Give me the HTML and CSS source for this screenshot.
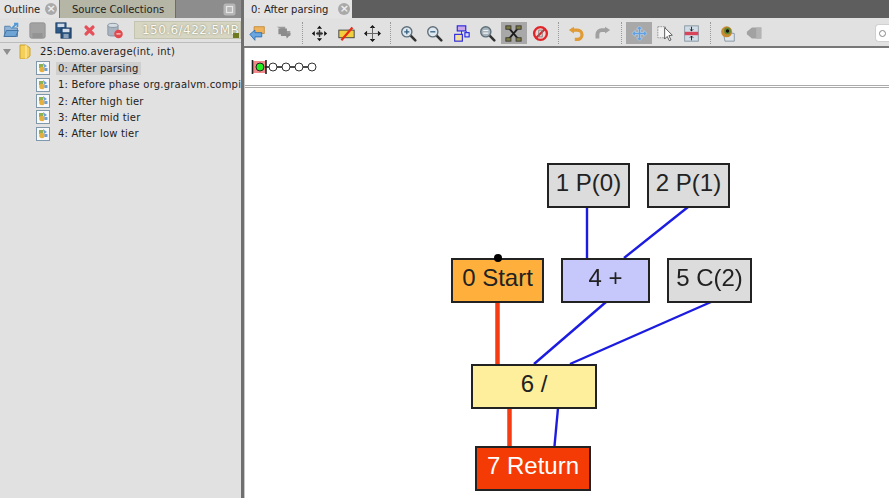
FILE: index.html
```html
<!DOCTYPE html>
<html>
<head>
<title>0: After parsing</title>
<link rel="stylesheet" href="styles.css">
</head>
<body>

<svg class="defs" width="0" height="0">
  <symbol id="i-open" viewBox="0 0 20 20">
    <path d="M2 5h6l2 2h7v10H2z" fill="#8fb4d8" stroke="#4a78a8"/>
    <path d="M1 17l3-7h14l-3 7z" fill="#6fa5d4" stroke="#3c6c9c"/>
    <path d="M11 7l5-5M13 2h4v4" fill="none" stroke="#4f9ad6" stroke-width="2"/>
  </symbol>
  <symbol id="i-save" viewBox="0 0 20 20">
    <rect x="1" y="1" width="18" height="18" rx="2" fill="#a2a2a2" stroke="#8f8f8f"/>
    <rect x="4" y="13" width="12" height="6" fill="#939393"/>
  </symbol>
  <symbol id="i-saveall" viewBox="0 0 20 20">
    <rect x="1" y="1" width="12" height="12" fill="#2e5a88" stroke="#1c3f66"/>
    <rect x="3" y="2" width="8" height="4" fill="#cfdbe8"/>
    <rect x="7" y="7" width="12" height="12" fill="#284f79" stroke="#1c3f66"/>
    <rect x="9" y="8" width="8" height="4" fill="#d5dfea"/>
    <rect x="10" y="14" width="6" height="5" fill="#8aa2ba"/>
  </symbol>
  <symbol id="i-x" viewBox="0 0 20 20">
    <path d="M6 6l8 8M14 6l-8 8" stroke="#e5505a" stroke-width="4" stroke-linecap="round"/>
  </symbol>
  <symbol id="i-db" viewBox="0 0 20 20">
    <path d="M1 4v11c0 2 12 2 12 0V4z" fill="#a9b4c0" stroke="#7e8c9a"/>
    <ellipse cx="7" cy="4" rx="6" ry="2.4" fill="#d5dce3" stroke="#7e8c9a"/>
    <circle cx="13.5" cy="14" r="5" fill="#e2484c"/>
    <path d="M11 14h5" stroke="#f7d0d0" stroke-width="1.5"/>
  </symbol>
  <symbol id="i-restore" viewBox="0 0 20 20">
    <rect x="2" y="2" width="16" height="16" rx="3" fill="#b5b5b5"/>
    <rect x="6" y="6" width="8" height="8" fill="none" stroke="#e6e6e6" stroke-width="1.6"/>
  </symbol>
  <symbol id="i-prev" viewBox="0 0 20 20">
    <path d="M6 2h12v8H6z" fill="#eeb35c" stroke="#c08a38"/>
    <path d="M1 11l6-5v3h8v5H7v4z" fill="#6aa7e0" stroke="#2c6cb0"/>
  </symbol>
  <symbol id="i-next" viewBox="0 0 20 20">
    <path d="M2 2h10v5h6v6h-7v-6" fill="#9b9b9b"/>
    <path d="M4 4h10v6h5l-5 6-1-3H7v-2H4z" fill="#8c8c8c"/>
  </symbol>
  <symbol id="i-in" viewBox="0 0 20 20">
    <path d="M10 1l3 3.5H7zM10 19l-3-3.5h6zM1 10l3.500-3v6zM19 10l-3.500 3V7z" fill="#111"/>
    <path d="M7 8h6v4H7z" fill="#777"/>
    <path d="M10 6v8M6 10h8" stroke="#333" stroke-width="1.600"/>
  </symbol>
  <symbol id="i-strike" viewBox="0 0 20 20">
    <rect x="1" y="6" width="18" height="9" fill="#f0d040" stroke="#333"/>
    <path d="M4 18L17 3" stroke="#ea2a14" stroke-width="2.600"/>
  </symbol>
  <symbol id="i-out" viewBox="0 0 20 20">
    <path d="M10 0l3.200 3.600H6.800zM10 20l-3.200-3.600h6.400zM0 10l3.600-3.200v6.400zM20 10l-3.600 3.200V6.800z" fill="#111"/>
    <path d="M10 3v14M3 10h14" stroke="#666" stroke-width="1.200"/>
  </symbol>
  <symbol id="i-zin" viewBox="0 0 20 20">
    <path d="M12 12l6 6" stroke="#333" stroke-width="3" stroke-linecap="round"/>
    <circle cx="8" cy="8" r="6" fill="#dfe8ef" stroke="#5f6f7a" stroke-width="1.600"/>
    <path d="M5 8h6M8 5v6" stroke="#2f5f80" stroke-width="1.500"/>
  </symbol>
  <symbol id="i-zout" viewBox="0 0 20 20">
    <path d="M12 12l6 6" stroke="#333" stroke-width="3" stroke-linecap="round"/>
    <circle cx="8" cy="8" r="6" fill="#dfe8ef" stroke="#5f6f7a" stroke-width="1.600"/>
    <path d="M5 8h6" stroke="#2f5f80" stroke-width="1.500"/>
  </symbol>
  <symbol id="i-tree" viewBox="0 0 20 20">
    <rect x="5" y="1" width="10" height="6" fill="#c8a8e8" stroke="#2222dd" stroke-width="1.300"/>
    <rect x="2" y="11" width="9" height="8" fill="#f2e0a0" stroke="#2222dd" stroke-width="1.300"/>
    <rect x="14" y="9" width="5" height="5" fill="#d8d8f8" stroke="#2222dd" stroke-width="1.300"/>
    <path d="M10 7v4M15 7l2 2" stroke="#2222dd"/>
  </symbol>
  <symbol id="i-zfit" viewBox="0 0 20 20">
    <path d="M12 12l6 6" stroke="#333" stroke-width="3" stroke-linecap="round"/>
    <circle cx="8" cy="8" r="6" fill="#a8b4bc" stroke="#5f6f7a" stroke-width="1.600"/>
    <path d="M5 6.500h6M5 9.500h6" stroke="#eef2f5" stroke-width="1.400"/>
  </symbol>
  <symbol id="i-graph" viewBox="0 0 20 20">
    <path d="M4 3l12 14M16 3L4 17" stroke="#1c1c1c" stroke-width="2.200"/>
    <rect x="1" y="1" width="6" height="4" fill="#7d7a3c" stroke="#333"/>
    <rect x="13" y="1" width="6" height="4" fill="#7d7a3c" stroke="#333"/>
    <rect x="1" y="15" width="6" height="4" fill="#7d7a3c" stroke="#333"/>
    <rect x="13" y="15" width="6" height="4" fill="#7d7a3c" stroke="#333"/>
  </symbol>
  <symbol id="i-ban" viewBox="0 0 20 20">
    <circle cx="10" cy="10" r="7.500" fill="#f4d8d8" stroke="#e0262a" stroke-width="2.800"/>
    <path d="M5 15L15 5" stroke="#e0262a" stroke-width="2.400"/>
    <rect x="8" y="6" width="4" height="8" fill="none" stroke="#777"/>
  </symbol>
  <symbol id="i-undo" viewBox="0 0 20 20">
    <path d="M4 6h7a5 5 0 0 1 0 11H8" fill="none" stroke="#e09a36" stroke-width="3.800"/>
    <path d="M1 6l6-4v8z" fill="#e09a36"/>
  </symbol>
  <symbol id="i-redo" viewBox="0 0 20 20">
    <path d="M15 6H9a5 5 0 0 0-5 5v5" fill="none" stroke="#a0a0a0" stroke-width="4.500"/>
    <path d="M19 6l-6-4v8z" fill="#a0a0a0"/>
  </symbol>
  <symbol id="i-pan" viewBox="0 0 20 20">
    <path d="M10 1l3.500 4h-2.300v3.800H15V6.500l4 3.500-4 3.500v-2.300h-3.800V15h2.300L10 19l-3.500-4h2.300v-3.800H5v2.300L1 10l4-3.500v2.300h3.800V5H6.500z" fill="#5f9fe2" stroke="#e4f0fa" stroke-width=".5"/>
  </symbol>
  <symbol id="i-select" viewBox="0 0 20 20">
    <rect x="1" y="2" width="9" height="13" fill="#f2f2f2" stroke="#8a8a8a" stroke-dasharray="2 1"/>
    <path d="M9 3l9 9-4 .5 2.500 5-2 1-2.500-5-3 3z" fill="#fff" stroke="#444"/>
  </symbol>
  <symbol id="i-split" viewBox="0 0 20 20">
    <rect x="2" y="1" width="16" height="18" fill="#d0dce6" stroke="#7e909e"/>
    <rect x="2" y="8" width="16" height="4" fill="#d8455a"/>
    <path d="M10 2v5M8 5l2 2 2-2M10 18v-5M8 15l2-2 2 2" stroke="#111" fill="none"/>
  </symbol>
  <symbol id="i-eye" viewBox="0 0 20 20">
    <path d="M5 8l13 2v9H7z" fill="#dfe4e8" stroke="#7e909e"/>
    <circle cx="9" cy="8" r="6.500" fill="#c88a30"/>
    <circle cx="10" cy="7" r="4" fill="#5f8a30"/>
    <circle cx="10" cy="7" r="2" fill="#111"/>
  </symbol>
  <symbol id="i-tag" viewBox="0 0 20 20">
    <path d="M7 3h11v13H7l-6-5V8z" fill="#a2a2a2"/>
    <rect x="12" y="3" width="6" height="13" fill="#b4b4b4"/>
  </symbol>
  <symbol id="i-group" viewBox="0 0 14 14">
    <rect x=".5" y=".5" width="13" height="13" fill="#f6f8fa" stroke="#7f98ac"/>
    <rect x="3" y="3" width="4" height="4" fill="#8fb050"/>
    <path d="M7 2l4 3-3 2z" fill="#6f9fd8"/>
    <circle cx="6" cy="8.500" r="2.800" fill="#e4b040"/>
    <rect x="8.500" y="7" width="3" height="3" fill="#6f9fd8"/>
  </symbol>
  <symbol id="i-folder" viewBox="0 0 12 15">
    <path d="M1 1h6l4 3v8l-4 3H2a1 1 0 0 1-1-1z" fill="#f4cf5a" stroke="#c8a030"/>
    <path d="M7 1v14" stroke="#fff0b0"/>
  </symbol>
</svg>

<div class="app">

  <div class="side">
    <div class="tabs side-tabs">
      <div class="tab tab-on tab-outline">Outline <span class="close">&times;</span></div>
      <div class="tab tab-off">Source Collections</div>
      <div class="tab-rest">
        <svg class="restore"><use href="#i-restore"/></svg>
      </div>
    </div>

    <div class="side-bar">
      <div class="side-tool"><svg class="ico"><use href="#i-open"/></svg></div>
      <div class="side-tool"><svg class="ico"><use href="#i-save"/></svg></div>
      <div class="side-tool"><svg class="ico"><use href="#i-saveall"/></svg></div>
      <div class="side-tool"><svg class="ico"><use href="#i-x"/></svg></div>
      <div class="side-tool"><svg class="ico"><use href="#i-db"/></svg></div>
      <div class="memory">150.6/422.5MB<span class="memory-mark"></span></div>
    </div>

    <ul class="tree">
      <li class="root">
        <span class="twist"></span>
        <svg class="folder"><use href="#i-folder"/></svg>
        <span>25:Demo.average(int, int)</span>
      </li>
      <li><svg class="leaf"><use href="#i-group"/></svg><span class="sel">0: After parsing</span></li>
      <li><svg class="leaf"><use href="#i-group"/></svg><span>1: Before phase org.graalvm.compi</span></li>
      <li><svg class="leaf"><use href="#i-group"/></svg><span>2: After high tier</span></li>
      <li><svg class="leaf"><use href="#i-group"/></svg><span>3: After mid tier</span></li>
      <li><svg class="leaf"><use href="#i-group"/></svg><span>4: After low tier</span></li>
    </ul>
  </div>

  <div class="split"></div>

  <div class="main">
    <div class="tabs main-tabs">
      <div class="tab tab-on tab-main">0: After parsing <span class="close close-main">&times;</span></div>
    </div>

    <div class="toolbar">
      <div class="group">
        <div class="tool"><svg class="ico"><use href="#i-prev"/></svg></div>
        <div class="tool"><svg class="ico"><use href="#i-next"/></svg></div>
      </div>
      <div class="group">
        <div class="tool"><svg class="ico"><use href="#i-in"/></svg></div>
        <div class="tool"><svg class="ico"><use href="#i-strike"/></svg></div>
        <div class="tool"><svg class="ico"><use href="#i-out"/></svg></div>
      </div>
      <div class="group">
        <div class="tool"><svg class="ico"><use href="#i-zin"/></svg></div>
        <div class="tool"><svg class="ico"><use href="#i-zout"/></svg></div>
        <div class="tool"><svg class="ico"><use href="#i-tree"/></svg></div>
        <div class="tool"><svg class="ico"><use href="#i-zfit"/></svg></div>
        <div class="tool tool-on"><svg class="ico"><use href="#i-graph"/></svg></div>
        <div class="tool"><svg class="ico"><use href="#i-ban"/></svg></div>
      </div>
      <div class="group">
        <div class="tool"><svg class="ico"><use href="#i-undo"/></svg></div>
        <div class="tool"><svg class="ico"><use href="#i-redo"/></svg></div>
      </div>
      <div class="group">
        <div class="tool tool-on"><svg class="ico"><use href="#i-pan"/></svg></div>
        <div class="tool"><svg class="ico"><use href="#i-select"/></svg></div>
        <div class="tool"><svg class="ico"><use href="#i-split"/></svg></div>
      </div>
      <div class="group group-last">
        <div class="tool"><svg class="ico"><use href="#i-eye"/></svg></div>
        <div class="tool"><svg class="ico"><use href="#i-tag"/></svg></div>
      </div>
      <div class="search"><span class="search-c"></span></div>
    </div>

    <div class="slider">
      <svg class="slider-svg" width="72" height="20" viewBox="0 0 72 20">
        <rect x="3" y="4" width="13" height="12" fill="#f08a8a"/>
        <path d="M15 10h48" stroke="#111" stroke-width="1.600"/>
        <path d="M2.500 3v14M16 3v14" stroke="#222" stroke-width="1.600"/>
        <circle cx="10" cy="10" r="4" fill="#22ee22" stroke="#222"/>
        <circle cx="23" cy="10" r="4" fill="#fff" stroke="#333"/>
        <circle cx="36" cy="10" r="4" fill="#fff" stroke="#333"/>
        <circle cx="49" cy="10" r="4" fill="#fff" stroke="#333"/>
        <circle cx="62" cy="10" r="4" fill="#fff" stroke="#333"/>
      </svg>
    </div>

    <div class="canvas">
      <svg class="edges" width="644" height="410" viewBox="245 88 644 410">
        <g class="data">
          <line x1="587" y1="207" x2="587" y2="258"/>
          <line x1="688" y1="207" x2="624" y2="258"/>
          <line x1="606" y1="302" x2="534" y2="364"/>
          <line x1="711" y1="302" x2="570" y2="364"/>
          <line x1="558" y1="408" x2="554.500" y2="446"/>
        </g>
        <g class="control">
          <line x1="497.500" y1="302" x2="497.500" y2="364"/>
          <line x1="509.500" y1="408" x2="509.500" y2="446"/>
        </g>
      </svg>
      <div class="node n-p0">1 P(0)</div>
      <div class="node n-p1">2 P(1)</div>
      <div class="node n-start">0 Start</div>
      <div class="node n-add">4 +</div>
      <div class="node n-c2">5 C(2)</div>
      <div class="node n-div">6 /</div>
      <div class="node n-ret">7 Return</div>
      <span class="slot"></span>
    </div>
  </div>

</div>

</body>
</html>
```

FILE: styles.css
```css
html, body { margin: 0; padding: 0; height: 100%; overflow: hidden; background: #fff; }
body       { font: 10px "DejaVu Sans", sans-serif; color: #222; }
.defs      { position: absolute; }
.app       { display: flex; height: 498px; filter: blur(0.6px); }

/* tabs */
.tabs       { display: flex; height: 18px; flex: none; }
.side-tabs  { background: #8d8d8d; }
.main-tabs  { background: #5e5e5e; }
.tab        { display: flex; align-items: center; box-sizing: border-box; white-space: nowrap; }
.tab-on     { background: #e4e4e4; }
.tab-off    { background: #b6b6a6; width: 117px; padding-left: 12px; border-right: 1px solid #6c6c6c; border-left: 1px solid #777; }
.tab-outline { width: 59px; padding-left: 4px; }
.tab-main   { width: 108px; padding-left: 7px; margin-left: -1px; }
.tab-rest   { flex: 1; display: flex; justify-content: flex-end; align-items: center; padding-right: 4px; }
.restore    { width: 15px; height: 15px; }
.close      { display: inline-block; width: 12px; height: 12px; margin-left: 5px; border-radius: 50%; background: #a9a9a9; color: #eee; font-size: 11px; line-height: 11px; text-align: center; font-weight: bold; }
.close-main { margin-left: 10px; }

/* left panel */
.side       { width: 241px; flex: none; background: #e1e1e1; overflow: hidden; }
.split      { width: 4px; flex: none; background: #c8c8c8; border-left: 3px solid #6f6f6f; box-sizing: border-box; }
.side-bar   { display: flex; align-items: center; gap: 4px; height: 24px; border-bottom: 1px solid #bcbcbc; }
.side-tool  { width: 22px; height: 20px; display: flex; justify-content: center; align-items: center; }
.ico        { width: 17px; height: 17px; }
.memory     { position: relative; flex: none; box-sizing: border-box; width: 107px; height: 18px; margin-left: 4px; padding-left: 7px; background: #d6d6c2; border: 1px solid #c4c4b0; color: #fbfbf4; font: 12px/16px "DejaVu Sans", sans-serif; letter-spacing: .45px; text-shadow: 0 0 2px #77776a; white-space: nowrap; overflow: hidden; }
.memory-mark { position: absolute; right: 1px; bottom: 0; width: 6px; height: 5px; background: #6f7a20; }

.tree       { list-style: none; margin: 0; padding: 0; white-space: nowrap; letter-spacing: .2px; }
.tree li    { display: flex; align-items: center; height: 16.3px; padding-left: 36px; }
.tree .root { padding-left: 3px; height: 17.3px; }
.tree li span { padding: 1px 2px; }
.tree li .twist { width: 0; height: 0; padding: 0; border-left: 4px solid transparent; border-right: 4px solid transparent; border-top: 6px solid #8f8f8f; }
.folder     { width: 12px; height: 15px; margin: 0 7px 0 8px; }
.leaf       { width: 14px; height: 14px; margin-right: 6px; flex: none; }
.tree li .sel { background: #cfcfcf; }

/* right panel */
.main       { flex: 1; min-width: 0; display: flex; flex-direction: column; }
.toolbar    { display: flex; align-items: center; height: 26px; padding-top: 2px; flex: none; background: #e1e1e1; border-bottom: 2px solid #777; margin-left: -1px; }
.group      { display: flex; padding: 0 5px 0 0; margin-right: 4px; border-right: 1px dotted #999; height: 22px; align-items: center; }
.group-last { border-right: 0; }
.tool       { width: 26.3px; height: 22px; display: flex; justify-content: center; align-items: center; }
.tool-on    { background: #a8a8a8; }
.search     { margin-left: auto; width: 14px; height: 18px; background: #fff; border: 1px solid #d0d0d0; border-right: 0; border-radius: 4px 0 0 4px; box-sizing: border-box; display: flex; align-items: center; padding-left: 3px; }
.search-c   { width: 7px; height: 7px; border: 1px solid #888; border-radius: 50%; box-sizing: border-box; }

.slider     { height: 40px; flex: none; box-sizing: border-box; border-bottom: 3px double #aaa; display: flex; align-items: center; padding-left: 5px; padding-top: 1px; }
.slider-svg { display: block; }

/* graph */
.canvas     { position: relative; flex: 1; overflow: hidden; }
.edges      { position: absolute; left: 0; top: 0; }
.data line  { stroke: #1c1ce0; stroke-width: 2.4; }
.control line { stroke: #f53c12; stroke-width: 4.5; }

.node       { position: absolute; box-sizing: border-box; height: 45px; padding-bottom: 5px; border: 2px solid #222; display: flex; justify-content: center; align-items: center; font: 24px "Liberation Sans", Arial, sans-serif; color: #222; }
.n-p0       { left: 302px; top: 75px; width: 83px; background: #dcdcdc; }
.n-p1       { left: 402px; top: 75px; width: 83px; background: #dcdcdc; }
.n-start    { left: 206px; top: 170px; width: 93px; background: #ffb03c; }
.n-add      { left: 316px; top: 170px; width: 89px; background: #c6c8fb; }
.n-c2       { left: 422px; top: 170px; width: 85px; background: #dcdcdc; }
.n-div      { left: 226px; top: 276px; width: 126px; background: #fdef9c; }
.n-ret      { left: 230px; top: 358px; width: 116px; background: #f53b05; color: #fff; }
.slot       { position: absolute; left: 248.500px; top: 166px; width: 8px; height: 8px; border-radius: 50%; background: #000; }
```
